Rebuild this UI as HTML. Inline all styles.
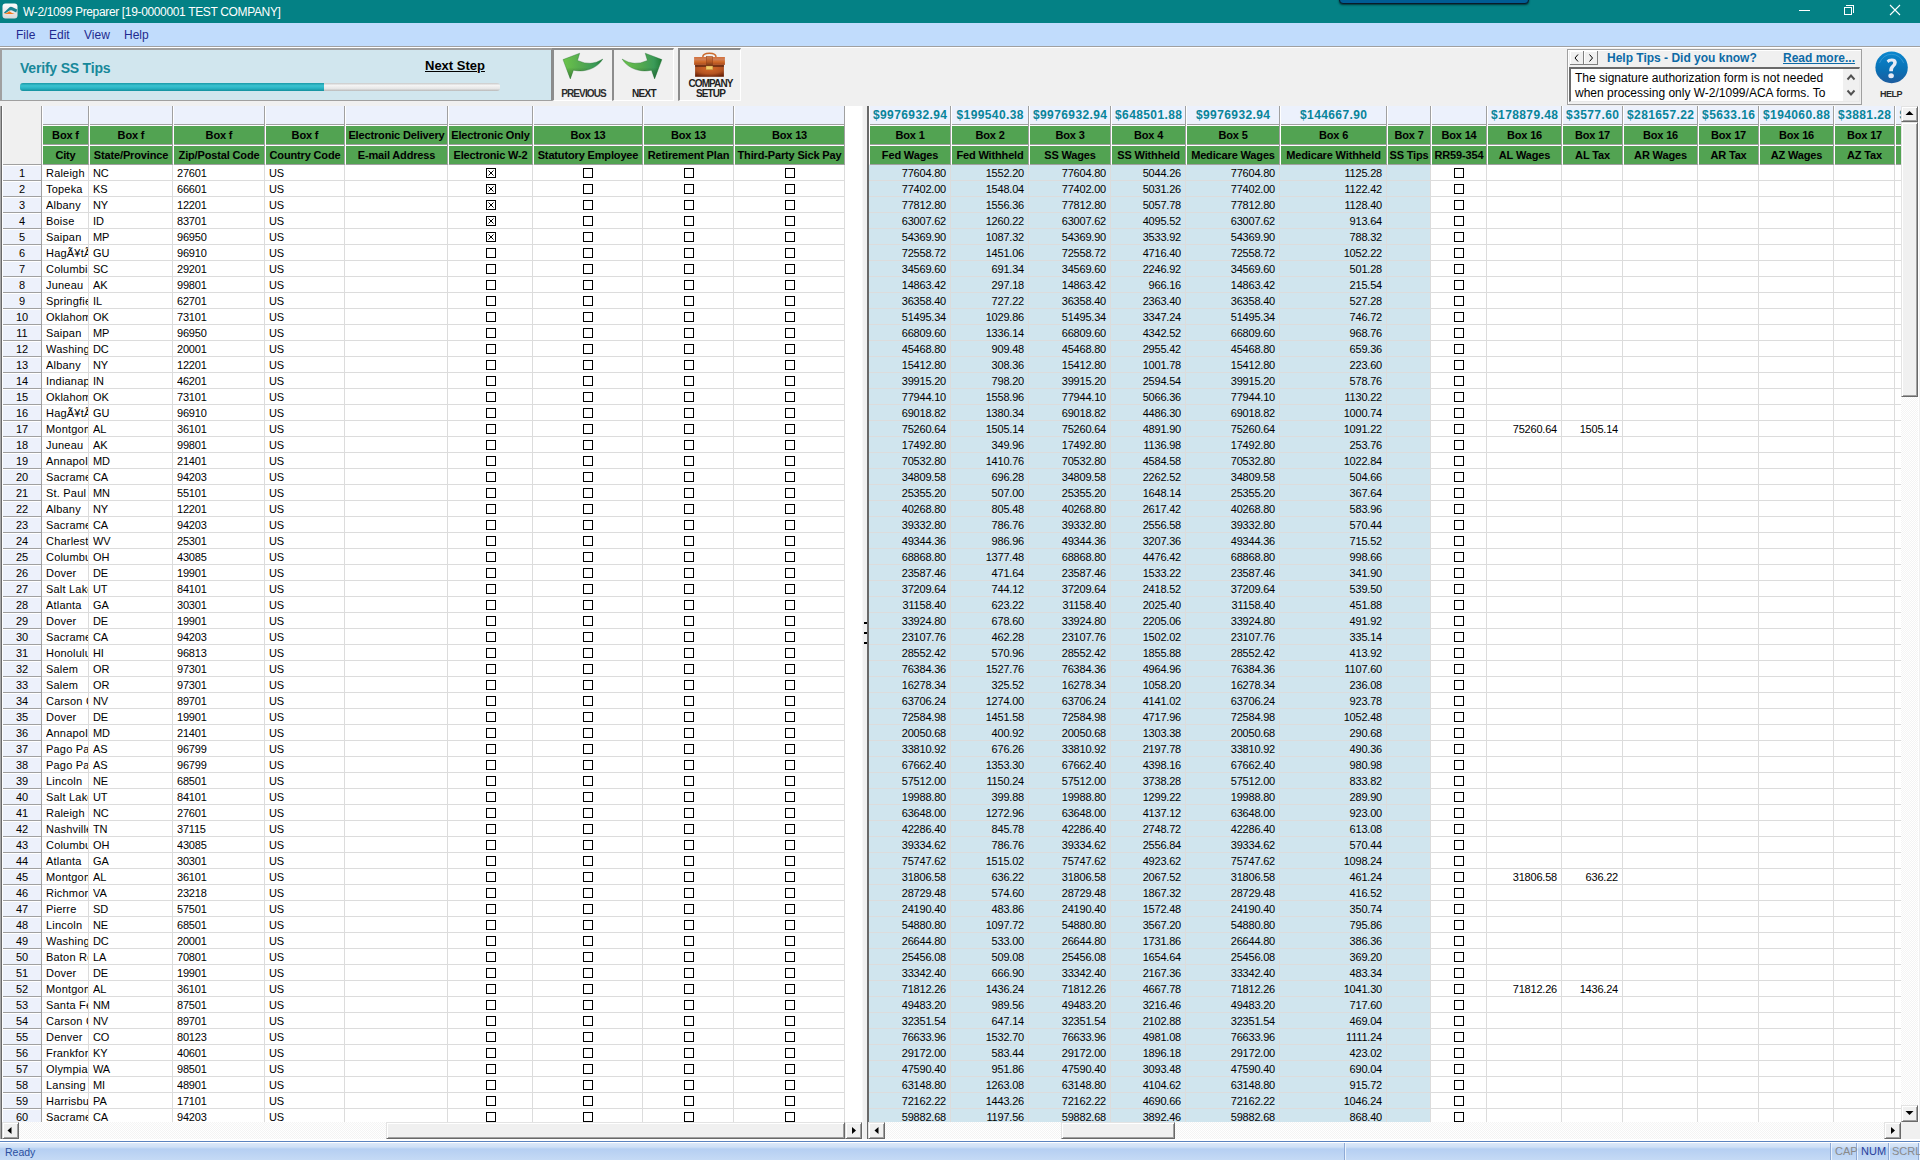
<!DOCTYPE html><html><head><meta charset="utf-8"><title>W-2/1099 Preparer</title><style>

*{box-sizing:border-box}
html,body{margin:0;padding:0}
body{width:1920px;height:1160px;overflow:hidden;position:relative;background:#f0f0f0;font-family:"Liberation Sans", sans-serif;font-size:11px;color:#000}
.ab{position:absolute}
.col{position:absolute;top:165px;height:957px;overflow:hidden}
.wcol{background:repeating-linear-gradient(to bottom,#fff 0,#fff 15px,#dcdcdc 15px,#dcdcdc 16px)}
.bcol{background:repeating-linear-gradient(to bottom,#d0e5ee 0,#d0e5ee 15px,#dcdcdc 15px,#dcdcdc 16px)}
.vl{position:absolute;top:165px;height:957px;width:1px;background:#dcdcdc}
.txt{position:absolute;top:0;left:0;right:0;line-height:16px;white-space:pre;font-size:11px}
.r{text-align:right}
.c{text-align:center}
.tot{position:absolute;top:106px;height:18px;background:#ecf1fc;color:#08849a;font-weight:bold;font-size:12px;letter-spacing:0.4px;text-indent:0.4px;text-align:center;line-height:19px;white-space:nowrap;overflow:hidden}
.hl{position:absolute;width:1px;background:#a0a0a0}
.g1,.g2{position:absolute;height:18px;background:#52a352;font-weight:bold;font-size:11px;letter-spacing:-0.15px;text-align:center;line-height:18px;white-space:nowrap;overflow:hidden}
.g1{top:126px}.g2{top:146px}
.cb{position:absolute;width:10px;height:10px;border:1px solid #000;background:#fff}
.sbtn{position:absolute;width:17px;height:17px;background:#f0f0f0;border-top:1px solid #e3e3e3;border-left:1px solid #e3e3e3;border-right:1px solid #696969;border-bottom:1px solid #696969;box-shadow:inset 1px 1px 0 #fff,inset -1px -1px 0 #a0a0a0}
.hatch{position:absolute;background-color:#f4f4f4;background-image:linear-gradient(45deg,#fff 25%,transparent 25%,transparent 75%,#fff 75%),linear-gradient(45deg,#fff 25%,transparent 25%,transparent 75%,#fff 75%);background-size:2px 2px;background-position:0 0,1px 1px}

</style></head><body>
<div class="ab" style="left:0;top:0;width:1920px;height:23px;background:#048185"></div>
<svg class="ab" style="left:2px;top:3px" width="16" height="16" viewBox="0 0 16 16">
<defs><linearGradient id="ig" x1="0" y1="0" x2="0" y2="1"><stop offset="0" stop-color="#fdfdfd"/><stop offset="1" stop-color="#d8d8d8"/></linearGradient></defs>
<rect x="0.5" y="0.5" width="15" height="15" rx="3" fill="url(#ig)"/>
<path d="M1.8 9.8 L7.5 4.2 Q8.5 3.4 10 4 L15.2 6.6 L14.2 9.6 L10.2 7.4 Q8.8 6.8 7.6 7.6 L3.4 10.2 Z" fill="#1b8592"/>
<path d="M1.6 10.9 Q5 10.4 7.4 8.2 Q10 10.2 12.8 10.9 Z" fill="#f47a1e"/>
</svg>
<div class="ab" style="left:23px;top:4px;height:16px;line-height:16px;color:#fff;font-size:12px;letter-spacing:-0.35px;white-space:nowrap">W-2/1099 Preparer [19-0000001 TEST COMPANY]</div>
<div class="ab" style="left:1339px;top:-6px;width:190px;height:10px;background:#005c94;border:1px solid #0a1a2a;border-radius:0 0 4px 4px;box-shadow:0 1px 2px rgba(0,0,0,.6)"></div>
<div class="ab" style="left:1799px;top:10px;width:11px;height:1px;background:#fff"></div>
<div class="ab" style="left:1846px;top:5px;width:8px;height:8px;border:1px solid #fff;border-left:none;border-bottom:none"></div>
<div class="ab" style="left:1844px;top:7px;width:8px;height:8px;border:1px solid #fff"></div>
<svg class="ab" style="left:1889px;top:4px" width="12" height="12" viewBox="0 0 12 12"><path d="M1 1 L11 11 M11 1 L1 11" stroke="#fff" stroke-width="1.1"/></svg>
<div class="ab" style="left:0;top:23px;width:1920px;height:23px;background:#c1dcfc"></div>
<div class="ab" style="left:16px;top:28px;line-height:14px;font-size:12px;color:#1f2a8f">File</div>
<div class="ab" style="left:49px;top:28px;line-height:14px;font-size:12px;color:#1f2a8f">Edit</div>
<div class="ab" style="left:84px;top:28px;line-height:14px;font-size:12px;color:#1f2a8f">View</div>
<div class="ab" style="left:124px;top:28px;line-height:14px;font-size:12px;color:#1f2a8f">Help</div>
<div class="ab" style="left:0;top:46px;width:1920px;height:1px;background:#a0a0a0"></div>
<div class="ab" style="left:0;top:47px;width:1920px;height:1px;background:#fff"></div>
<div class="ab" style="left:0;top:48px;width:553px;height:53px;background:#d1e6ee;border-top:2px solid #a0a0a0;border-left:2px solid #a0a0a0;border-right:2px solid #8a8a8a;border-bottom:1px solid #a0a0a0"></div>
<div class="ab" style="left:20px;top:59px;line-height:18px;font-size:14px;font-weight:bold;color:#17889a;white-space:nowrap;letter-spacing:-0.2px">Verify SS Tips</div>
<div class="ab" style="left:425px;top:58px;line-height:16px;font-size:13px;font-weight:bold;color:#000;text-decoration:underline;white-space:nowrap">Next Step</div>
<div class="ab" style="left:20px;top:83px;width:480px;height:8px;border-radius:3px;background:linear-gradient(to bottom,#c8c8c8 0,#f4f4f4 30%,#e6e6e6 70%,#b8b8b8 100%)"></div>
<div class="ab" style="left:20px;top:83px;width:304px;height:8px;border-radius:3px 0 0 3px;background:linear-gradient(to bottom,#1a9aa8 0,#3cc2d0 35%,#2ab4c4 65%,#14909e 100%)"></div>
<div class="ab" style="left:552px;top:48px;width:61px;height:53px;background:#f0f0f0;border-top:2px solid #8c8c8c;border-left:2px solid #8c8c8c;border-right:1px solid #fff;border-bottom:1px solid #fff"></div>
<div class="ab" style="left:612px;top:48px;width:62px;height:53px;background:#f0f0f0;border-top:2px solid #8c8c8c;border-left:2px solid #8c8c8c;border-right:1px solid #fff;border-bottom:1px solid #fff"></div>
<div class="ab" style="left:678px;top:48px;width:63px;height:53px;background:#f0f0f0;border-top:2px solid #8c8c8c;border-left:2px solid #8c8c8c;border-right:1px solid #fff;border-bottom:1px solid #fff"></div>
<svg class="ab" style="left:555px;top:48px" width="60" height="36" viewBox="0 0 60 36">
<defs><linearGradient id="ag1" x1="0" y1="0" x2="1" y2="0"><stop offset="0" stop-color="#6cc44a"/><stop offset="0.5" stop-color="#52a850"/><stop offset="0.8" stop-color="#3a9a58"/><stop offset="1" stop-color="#1f7a34"/></linearGradient>
<linearGradient id="ag1b" x1="0" y1="0" x2="0" y2="1"><stop offset="0.55" stop-color="#000" stop-opacity="0"/><stop offset="1" stop-color="#0a4a1a" stop-opacity="0.45"/></linearGradient></defs>
<path d="M8 11.6 L24.7 5.2 L22.5 12.5 Q36 18.8 47.8 11.1 C42 20.5 30 24.8 18.4 22.2 L15.3 30.9 Z" fill="url(#ag1)" stroke="#1d6a2c" stroke-width="0.5" stroke-opacity="0.7"/>
<path d="M8 11.6 L24.7 5.2 L22.5 12.5 Q36 18.8 47.8 11.1 C42 20.5 30 24.8 18.4 22.2 L15.3 30.9 Z" fill="url(#ag1b)"/>
</svg>
<svg class="ab" style="left:615px;top:48px" width="60" height="36" viewBox="0 0 60 36">
<defs><linearGradient id="ag2" x1="1" y1="0" x2="0" y2="0"><stop offset="0" stop-color="#6cc44a"/><stop offset="0.5" stop-color="#52a850"/><stop offset="0.8" stop-color="#3a9a58"/><stop offset="1" stop-color="#1f7a34"/></linearGradient></defs>
<g transform="translate(54.9 0) scale(-1 1)">
<path d="M8 11.6 L24.7 5.2 L22.5 12.5 Q36 18.8 47.8 11.1 C42 20.5 30 24.8 18.4 22.2 L15.3 30.9 Z" fill="url(#ag2)" stroke="#1d6a2c" stroke-width="0.5" stroke-opacity="0.7"/>
<path d="M8 11.6 L24.7 5.2 L22.5 12.5 Q36 18.8 47.8 11.1 C42 20.5 30 24.8 18.4 22.2 L15.3 30.9 Z" fill="url(#ag1b)"/>
</g>
</svg>
<svg class="ab" style="left:685px;top:48px" width="50" height="32" viewBox="0 0 50 32">
<defs>
<linearGradient id="bf1" x1="0" y1="0" x2="0" y2="1"><stop offset="0" stop-color="#d4703a"/><stop offset="0.3" stop-color="#d08058"/><stop offset="0.6" stop-color="#d06a28"/><stop offset="1" stop-color="#a84a1e"/></linearGradient>
<radialGradient id="bf2" cx="0.5" cy="0.3" r="0.75"><stop offset="0" stop-color="#d86a28"/><stop offset="0.6" stop-color="#b45422"/><stop offset="1" stop-color="#6a2208"/></radialGradient>
<linearGradient id="bf3" x1="0" y1="0" x2="0" y2="1"><stop offset="0" stop-color="#d08050"/><stop offset="0.6" stop-color="#b85a24"/><stop offset="1" stop-color="#7a3a18"/></linearGradient>
</defs>
<path d="M17.8 9 Q17.8 5.2 24.4 5.2 Q31 5.2 31 9" fill="none" stroke="#cc6a2c" stroke-width="1.5"/>
<rect x="10.1" y="16.8" width="28.8" height="12" fill="url(#bf2)"/>
<rect x="10.1" y="16.8" width="28.8" height="2.2" fill="#5a2410" opacity="0.7"/>
<rect x="9.1" y="9" width="30.8" height="7.9" fill="url(#bf1)"/>
<rect x="21.2" y="8.3" width="6.5" height="9" fill="url(#bf3)" stroke="#8a3a18" stroke-width="0.4"/>
<rect x="21" y="18" width="6.9" height="3.8" fill="#f2cc68" stroke="#8a5a20" stroke-width="0.3"/>
</svg>
<div class="ab" style="left:554px;top:88px;width:59px;line-height:11px;font-size:10px;font-weight:bold;color:#2c2c2c;text-align:center;letter-spacing:-0.9px">PREVIOUS</div>
<div class="ab" style="left:614px;top:88px;width:60px;line-height:11px;font-size:10px;font-weight:bold;color:#222;text-align:center;letter-spacing:-0.7px">NEXT</div>
<div class="ab" style="left:680px;top:79px;width:61px;line-height:10px;font-size:10px;font-weight:bold;color:#222;text-align:center;letter-spacing:-0.9px">COMPANY<br>SETUP</div>
<div class="ab" style="left:1567px;top:49px;width:295px;height:56px;background:#f0f0f0;border:1px solid #a0a0a0;box-shadow:inset 1px 1px 0 #fff"></div>
<div class="ab" style="left:1570px;top:51px;width:14px;height:14px;background:#f0f0f0;border-right:1px solid #808080;border-bottom:1px solid #808080;box-shadow:inset 1px 1px 0 #fff"></div>
<div class="ab" style="left:1584px;top:51px;width:14px;height:14px;background:#f0f0f0;border-right:1px solid #808080;border-bottom:1px solid #808080;box-shadow:inset 1px 1px 0 #fff"></div>
<svg class="ab" style="left:1572px;top:53px" width="10" height="10" viewBox="0 0 10 10"><path d="M6 1.5 L3 5 L6 8.5" fill="none" stroke="#000" stroke-width="1"/></svg>
<svg class="ab" style="left:1586px;top:53px" width="10" height="10" viewBox="0 0 10 10"><path d="M3.5 1.5 L6.5 5 L3.5 8.5" fill="none" stroke="#000" stroke-width="1"/></svg>
<div class="ab" style="left:1607px;top:51px;line-height:15px;font-size:12px;font-weight:bold;color:#0d6aa6;white-space:nowrap">Help Tips - Did you know?</div>
<div class="ab" style="left:1783px;top:51px;line-height:15px;font-size:12px;font-weight:bold;color:#0d6aa6;white-space:nowrap;text-decoration:underline">Read more...</div>
<div class="ab" style="left:1569px;top:67px;width:291px;height:35px;background:#fff;border-top:2px solid #6a6a6a;border-left:2px solid #6a6a6a;border-right:1px solid #e8e8e8;border-bottom:1px solid #e8e8e8"></div>
<div class="ab" style="left:1843px;top:69px;width:16px;height:32px;background:#f0f0f0"></div>
<svg class="ab" style="left:1846px;top:72px" width="10" height="26" viewBox="0 0 10 26"><path d="M1.5 7.5 L5 3.5 L8.5 7.5 M1.5 18.5 L5 22.5 L8.5 18.5" fill="none" stroke="#505050" stroke-width="1.9"/></svg>
<div class="ab" style="left:1575px;top:71px;line-height:15px;font-size:12px;color:#000;white-space:pre">The signature authorization form is not needed
when processing only W-2/1099/ACA forms. To</div>
<svg class="ab" style="left:1874px;top:50px" width="36" height="36" viewBox="0 0 36 36">
<defs><linearGradient id="hg" x1="0" y1="0" x2="0" y2="1"><stop offset="0" stop-color="#0a86ce"/><stop offset="0.6" stop-color="#0a70b4"/><stop offset="1" stop-color="#1e5c9e"/></linearGradient></defs>
<ellipse cx="17.6" cy="17.4" rx="16.2" ry="15.8" fill="url(#hg)"/>
<path d="M5.5 13 Q9 4.5 17.6 4.3 Q26 4.5 29.7 13" fill="none" stroke="#5aaee0" stroke-width="0.7" opacity="0.7"/>
<path d="M12.6 10.6 Q14 8.5 17.8 8.5 Q22.8 8.7 22.8 12.6 Q22.8 15 20.2 17.2 Q18.9 18.4 18.9 21.2 L15.2 21.2 Q15 17.2 17.6 15.2 Q19.2 14 19.2 12.8 Q19.2 11.6 17.6 11.6 Q15.8 11.6 14.4 13 Z" fill="#e6eaf6"/>
<ellipse cx="17.1" cy="25.7" rx="2.8" ry="2.5" fill="#e6eaf6"/>
</svg>
<div class="ab" style="left:1874px;top:89px;width:34px;line-height:11px;font-size:9px;font-weight:bold;color:#2a2a2a;text-align:center;letter-spacing:-0.5px">HELP</div>
<div class="ab" style="left:0;top:106px;width:1px;height:1034px;background:#a8a8a8"></div>
<div class="ab" style="left:1px;top:106px;width:1px;height:1034px;background:#696969"></div>
<div class="ab" style="left:2px;top:106px;width:1px;height:1016px;background:#fff"></div>
<div class="ab" style="left:3px;top:106px;width:38px;height:58px;background:#f0f0f0"></div>
<div class="ab" style="left:3px;top:164px;width:38px;height:1px;background:#a0a0a0"></div>
<div class="col" style="left:3px;width:38px;background:repeating-linear-gradient(to bottom,#fff 0,#fff 1px,#edf1fb 1px,#edf1fb 15px,#a0a0a0 15px,#a0a0a0 16px)"><div class="txt c">1
2
3
4
5
6
7
8
9
10
11
12
13
14
15
16
17
18
19
20
21
22
23
24
25
26
27
28
29
30
31
32
33
34
35
36
37
38
39
40
41
42
43
44
45
46
47
48
49
50
51
52
53
54
55
56
57
58
59
60
</div></div>
<div class="hl" style="left:41px;top:106px;height:1016px"></div>
<div class="ab" style="left:0;top:0;width:862px;height:1160px;overflow:hidden">
<div class="ab" style="left:42px;top:106px;width:1px;height:58px;background:#fff"></div>
<div class="tot" style="left:43px;width:45px"></div>
<div class="ab" style="left:43px;top:124px;width:46px;height:1px;background:#a0a0a0"></div>
<div class="ab" style="left:43px;top:125px;width:45px;height:1px;background:#fff"></div>
<div class="g1" style="left:43px;width:45px">Box f</div>
<div class="ab" style="left:43px;top:144px;width:46px;height:1px;background:#a0a0a0"></div>
<div class="ab" style="left:43px;top:145px;width:45px;height:1px;background:#fff"></div>
<div class="g2" style="left:43px;width:45px">City</div>
<div class="ab" style="left:43px;top:164px;width:46px;height:1px;background:#a0a0a0"></div>
<div class="hl" style="left:88px;top:106px;height:58px"></div>
<div class="ab" style="left:89px;top:106px;width:1px;height:58px;background:#fff"></div>
<div class="tot" style="left:90px;width:82px"></div>
<div class="ab" style="left:90px;top:124px;width:83px;height:1px;background:#a0a0a0"></div>
<div class="ab" style="left:90px;top:125px;width:82px;height:1px;background:#fff"></div>
<div class="g1" style="left:90px;width:82px">Box f</div>
<div class="ab" style="left:90px;top:144px;width:83px;height:1px;background:#a0a0a0"></div>
<div class="ab" style="left:90px;top:145px;width:82px;height:1px;background:#fff"></div>
<div class="g2" style="left:90px;width:82px">State/Province</div>
<div class="ab" style="left:90px;top:164px;width:83px;height:1px;background:#a0a0a0"></div>
<div class="hl" style="left:172px;top:106px;height:58px"></div>
<div class="ab" style="left:173px;top:106px;width:1px;height:58px;background:#fff"></div>
<div class="tot" style="left:174px;width:90px"></div>
<div class="ab" style="left:174px;top:124px;width:91px;height:1px;background:#a0a0a0"></div>
<div class="ab" style="left:174px;top:125px;width:90px;height:1px;background:#fff"></div>
<div class="g1" style="left:174px;width:90px">Box f</div>
<div class="ab" style="left:174px;top:144px;width:91px;height:1px;background:#a0a0a0"></div>
<div class="ab" style="left:174px;top:145px;width:90px;height:1px;background:#fff"></div>
<div class="g2" style="left:174px;width:90px">Zip/Postal Code</div>
<div class="ab" style="left:174px;top:164px;width:91px;height:1px;background:#a0a0a0"></div>
<div class="hl" style="left:264px;top:106px;height:58px"></div>
<div class="ab" style="left:265px;top:106px;width:1px;height:58px;background:#fff"></div>
<div class="tot" style="left:266px;width:78px"></div>
<div class="ab" style="left:266px;top:124px;width:79px;height:1px;background:#a0a0a0"></div>
<div class="ab" style="left:266px;top:125px;width:78px;height:1px;background:#fff"></div>
<div class="g1" style="left:266px;width:78px">Box f</div>
<div class="ab" style="left:266px;top:144px;width:79px;height:1px;background:#a0a0a0"></div>
<div class="ab" style="left:266px;top:145px;width:78px;height:1px;background:#fff"></div>
<div class="g2" style="left:266px;width:78px">Country Code</div>
<div class="ab" style="left:266px;top:164px;width:79px;height:1px;background:#a0a0a0"></div>
<div class="hl" style="left:344px;top:106px;height:58px"></div>
<div class="ab" style="left:345px;top:106px;width:1px;height:58px;background:#fff"></div>
<div class="tot" style="left:346px;width:101px"></div>
<div class="ab" style="left:346px;top:124px;width:102px;height:1px;background:#a0a0a0"></div>
<div class="ab" style="left:346px;top:125px;width:101px;height:1px;background:#fff"></div>
<div class="g1" style="left:346px;width:101px">Electronic Delivery</div>
<div class="ab" style="left:346px;top:144px;width:102px;height:1px;background:#a0a0a0"></div>
<div class="ab" style="left:346px;top:145px;width:101px;height:1px;background:#fff"></div>
<div class="g2" style="left:346px;width:101px">E-mail Address</div>
<div class="ab" style="left:346px;top:164px;width:102px;height:1px;background:#a0a0a0"></div>
<div class="hl" style="left:447px;top:106px;height:58px"></div>
<div class="ab" style="left:448px;top:106px;width:1px;height:58px;background:#fff"></div>
<div class="tot" style="left:449px;width:83px"></div>
<div class="ab" style="left:449px;top:124px;width:84px;height:1px;background:#a0a0a0"></div>
<div class="ab" style="left:449px;top:125px;width:83px;height:1px;background:#fff"></div>
<div class="g1" style="left:449px;width:83px">Electronic Only</div>
<div class="ab" style="left:449px;top:144px;width:84px;height:1px;background:#a0a0a0"></div>
<div class="ab" style="left:449px;top:145px;width:83px;height:1px;background:#fff"></div>
<div class="g2" style="left:449px;width:83px">Electronic W-2</div>
<div class="ab" style="left:449px;top:164px;width:84px;height:1px;background:#a0a0a0"></div>
<div class="hl" style="left:532px;top:106px;height:58px"></div>
<div class="ab" style="left:533px;top:106px;width:1px;height:58px;background:#fff"></div>
<div class="tot" style="left:534px;width:108px"></div>
<div class="ab" style="left:534px;top:124px;width:109px;height:1px;background:#a0a0a0"></div>
<div class="ab" style="left:534px;top:125px;width:108px;height:1px;background:#fff"></div>
<div class="g1" style="left:534px;width:108px">Box 13</div>
<div class="ab" style="left:534px;top:144px;width:109px;height:1px;background:#a0a0a0"></div>
<div class="ab" style="left:534px;top:145px;width:108px;height:1px;background:#fff"></div>
<div class="g2" style="left:534px;width:108px">Statutory Employee</div>
<div class="ab" style="left:534px;top:164px;width:109px;height:1px;background:#a0a0a0"></div>
<div class="hl" style="left:642px;top:106px;height:58px"></div>
<div class="ab" style="left:643px;top:106px;width:1px;height:58px;background:#fff"></div>
<div class="tot" style="left:644px;width:89px"></div>
<div class="ab" style="left:644px;top:124px;width:90px;height:1px;background:#a0a0a0"></div>
<div class="ab" style="left:644px;top:125px;width:89px;height:1px;background:#fff"></div>
<div class="g1" style="left:644px;width:89px">Box 13</div>
<div class="ab" style="left:644px;top:144px;width:90px;height:1px;background:#a0a0a0"></div>
<div class="ab" style="left:644px;top:145px;width:89px;height:1px;background:#fff"></div>
<div class="g2" style="left:644px;width:89px">Retirement Plan</div>
<div class="ab" style="left:644px;top:164px;width:90px;height:1px;background:#a0a0a0"></div>
<div class="hl" style="left:733px;top:106px;height:58px"></div>
<div class="ab" style="left:734px;top:106px;width:1px;height:58px;background:#fff"></div>
<div class="tot" style="left:735px;width:109px"></div>
<div class="ab" style="left:735px;top:124px;width:110px;height:1px;background:#a0a0a0"></div>
<div class="ab" style="left:735px;top:125px;width:109px;height:1px;background:#fff"></div>
<div class="g1" style="left:735px;width:109px">Box 13</div>
<div class="ab" style="left:735px;top:144px;width:110px;height:1px;background:#a0a0a0"></div>
<div class="ab" style="left:735px;top:145px;width:109px;height:1px;background:#fff"></div>
<div class="g2" style="left:735px;width:109px">Third-Party Sick Pay</div>
<div class="ab" style="left:735px;top:164px;width:110px;height:1px;background:#a0a0a0"></div>
<div class="hl" style="left:844px;top:106px;height:58px"></div>
<div class="col wcol" style="left:42px;width:46px">
<div class="txt" style="left:4px;right:0;overflow:hidden;letter-spacing:0.2px">Raleigh
Topeka
Albany
Boise
Saipan
HagÃ¥tÃ±a
Columbia
Juneau
Springfield
Oklahoma City
Saipan
Washington
Albany
Indianapolis
Oklahoma City
HagÃ¥tÃ±a
Montgomery
Juneau
Annapolis
Sacramento
St. Paul
Albany
Sacramento
Charleston
Columbus
Dover
Salt Lake City
Atlanta
Dover
Sacramento
Honolulu
Salem
Salem
Carson City
Dover
Annapolis
Pago Pago
Pago Pago
Lincoln
Salt Lake City
Raleigh
Nashville
Columbus
Atlanta
Montgomery
Richmond
Pierre
Lincoln
Washington
Baton Rouge
Dover
Montgomery
Santa Fe
Carson City
Denver
Frankfort
Olympia
Lansing
Harrisburg
Sacramento</div>
</div>
<div class="vl" style="left:88px"></div>
<div class="col wcol" style="left:89px;width:83px">
<div class="txt" style="left:4px;right:0;overflow:hidden;letter-spacing:-0.1px">NC
KS
NY
ID
MP
GU
SC
AK
IL
OK
MP
DC
NY
IN
OK
GU
AL
AK
MD
CA
MN
NY
CA
WV
OH
DE
UT
GA
DE
CA
HI
OR
OR
NV
DE
MD
AS
AS
NE
UT
NC
TN
OH
GA
AL
VA
SD
NE
DC
LA
DE
AL
NM
NV
CO
KY
WA
MI
PA
CA</div>
</div>
<div class="vl" style="left:172px"></div>
<div class="col wcol" style="left:173px;width:91px">
<div class="txt" style="left:4px;right:0;overflow:hidden;letter-spacing:-0.2px">27601
66601
12201
83701
96950
96910
29201
99801
62701
73101
96950
20001
12201
46201
73101
96910
36101
99801
21401
94203
55101
12201
94203
25301
43085
19901
84101
30301
19901
94203
96813
97301
97301
89701
19901
21401
96799
96799
68501
84101
27601
37115
43085
30301
36101
23218
57501
68501
20001
70801
19901
36101
87501
89701
80123
40601
98501
48901
17101
94203</div>
</div>
<div class="vl" style="left:264px"></div>
<div class="col wcol" style="left:265px;width:79px">
<div class="txt" style="left:4px;right:0;overflow:hidden;letter-spacing:-0.3px">US
US
US
US
US
US
US
US
US
US
US
US
US
US
US
US
US
US
US
US
US
US
US
US
US
US
US
US
US
US
US
US
US
US
US
US
US
US
US
US
US
US
US
US
US
US
US
US
US
US
US
US
US
US
US
US
US
US
US
US</div>
</div>
<div class="vl" style="left:344px"></div>
<div class="col wcol" style="left:345px;width:102px">
<div class="txt" style="left:4px;right:0;overflow:hidden;letter-spacing:0">


























































</div>
</div>
<div class="vl" style="left:447px"></div>
<div class="col wcol" style="left:448px;width:84px">
<svg class="ab" style="left:38px;top:3px" width="10" height="10" viewBox="0 0 10 10"><rect x="0.5" y="0.5" width="9" height="9" fill="#fff" stroke="#000"/><path d="M2.5 2.5 L7.5 7.5 M7.5 2.5 L2.5 7.5" stroke="#000" stroke-width="1"/></svg>
<svg class="ab" style="left:38px;top:19px" width="10" height="10" viewBox="0 0 10 10"><rect x="0.5" y="0.5" width="9" height="9" fill="#fff" stroke="#000"/><path d="M2.5 2.5 L7.5 7.5 M7.5 2.5 L2.5 7.5" stroke="#000" stroke-width="1"/></svg>
<svg class="ab" style="left:38px;top:35px" width="10" height="10" viewBox="0 0 10 10"><rect x="0.5" y="0.5" width="9" height="9" fill="#fff" stroke="#000"/><path d="M2.5 2.5 L7.5 7.5 M7.5 2.5 L2.5 7.5" stroke="#000" stroke-width="1"/></svg>
<svg class="ab" style="left:38px;top:51px" width="10" height="10" viewBox="0 0 10 10"><rect x="0.5" y="0.5" width="9" height="9" fill="#fff" stroke="#000"/><path d="M2.5 2.5 L7.5 7.5 M7.5 2.5 L2.5 7.5" stroke="#000" stroke-width="1"/></svg>
<svg class="ab" style="left:38px;top:67px" width="10" height="10" viewBox="0 0 10 10"><rect x="0.5" y="0.5" width="9" height="9" fill="#fff" stroke="#000"/><path d="M2.5 2.5 L7.5 7.5 M7.5 2.5 L2.5 7.5" stroke="#000" stroke-width="1"/></svg>
<div class="cb" style="left:38px;top:83px"></div>
<div class="cb" style="left:38px;top:99px"></div>
<div class="cb" style="left:38px;top:115px"></div>
<div class="cb" style="left:38px;top:131px"></div>
<div class="cb" style="left:38px;top:147px"></div>
<div class="cb" style="left:38px;top:163px"></div>
<div class="cb" style="left:38px;top:179px"></div>
<div class="cb" style="left:38px;top:195px"></div>
<div class="cb" style="left:38px;top:211px"></div>
<div class="cb" style="left:38px;top:227px"></div>
<div class="cb" style="left:38px;top:243px"></div>
<div class="cb" style="left:38px;top:259px"></div>
<div class="cb" style="left:38px;top:275px"></div>
<div class="cb" style="left:38px;top:291px"></div>
<div class="cb" style="left:38px;top:307px"></div>
<div class="cb" style="left:38px;top:323px"></div>
<div class="cb" style="left:38px;top:339px"></div>
<div class="cb" style="left:38px;top:355px"></div>
<div class="cb" style="left:38px;top:371px"></div>
<div class="cb" style="left:38px;top:387px"></div>
<div class="cb" style="left:38px;top:403px"></div>
<div class="cb" style="left:38px;top:419px"></div>
<div class="cb" style="left:38px;top:435px"></div>
<div class="cb" style="left:38px;top:451px"></div>
<div class="cb" style="left:38px;top:467px"></div>
<div class="cb" style="left:38px;top:483px"></div>
<div class="cb" style="left:38px;top:499px"></div>
<div class="cb" style="left:38px;top:515px"></div>
<div class="cb" style="left:38px;top:531px"></div>
<div class="cb" style="left:38px;top:547px"></div>
<div class="cb" style="left:38px;top:563px"></div>
<div class="cb" style="left:38px;top:579px"></div>
<div class="cb" style="left:38px;top:595px"></div>
<div class="cb" style="left:38px;top:611px"></div>
<div class="cb" style="left:38px;top:627px"></div>
<div class="cb" style="left:38px;top:643px"></div>
<div class="cb" style="left:38px;top:659px"></div>
<div class="cb" style="left:38px;top:675px"></div>
<div class="cb" style="left:38px;top:691px"></div>
<div class="cb" style="left:38px;top:707px"></div>
<div class="cb" style="left:38px;top:723px"></div>
<div class="cb" style="left:38px;top:739px"></div>
<div class="cb" style="left:38px;top:755px"></div>
<div class="cb" style="left:38px;top:771px"></div>
<div class="cb" style="left:38px;top:787px"></div>
<div class="cb" style="left:38px;top:803px"></div>
<div class="cb" style="left:38px;top:819px"></div>
<div class="cb" style="left:38px;top:835px"></div>
<div class="cb" style="left:38px;top:851px"></div>
<div class="cb" style="left:38px;top:867px"></div>
<div class="cb" style="left:38px;top:883px"></div>
<div class="cb" style="left:38px;top:899px"></div>
<div class="cb" style="left:38px;top:915px"></div>
<div class="cb" style="left:38px;top:931px"></div>
<div class="cb" style="left:38px;top:947px"></div>
</div>
<div class="vl" style="left:532px"></div>
<div class="col wcol" style="left:533px;width:109px">
<div class="cb" style="left:50px;top:3px"></div>
<div class="cb" style="left:50px;top:19px"></div>
<div class="cb" style="left:50px;top:35px"></div>
<div class="cb" style="left:50px;top:51px"></div>
<div class="cb" style="left:50px;top:67px"></div>
<div class="cb" style="left:50px;top:83px"></div>
<div class="cb" style="left:50px;top:99px"></div>
<div class="cb" style="left:50px;top:115px"></div>
<div class="cb" style="left:50px;top:131px"></div>
<div class="cb" style="left:50px;top:147px"></div>
<div class="cb" style="left:50px;top:163px"></div>
<div class="cb" style="left:50px;top:179px"></div>
<div class="cb" style="left:50px;top:195px"></div>
<div class="cb" style="left:50px;top:211px"></div>
<div class="cb" style="left:50px;top:227px"></div>
<div class="cb" style="left:50px;top:243px"></div>
<div class="cb" style="left:50px;top:259px"></div>
<div class="cb" style="left:50px;top:275px"></div>
<div class="cb" style="left:50px;top:291px"></div>
<div class="cb" style="left:50px;top:307px"></div>
<div class="cb" style="left:50px;top:323px"></div>
<div class="cb" style="left:50px;top:339px"></div>
<div class="cb" style="left:50px;top:355px"></div>
<div class="cb" style="left:50px;top:371px"></div>
<div class="cb" style="left:50px;top:387px"></div>
<div class="cb" style="left:50px;top:403px"></div>
<div class="cb" style="left:50px;top:419px"></div>
<div class="cb" style="left:50px;top:435px"></div>
<div class="cb" style="left:50px;top:451px"></div>
<div class="cb" style="left:50px;top:467px"></div>
<div class="cb" style="left:50px;top:483px"></div>
<div class="cb" style="left:50px;top:499px"></div>
<div class="cb" style="left:50px;top:515px"></div>
<div class="cb" style="left:50px;top:531px"></div>
<div class="cb" style="left:50px;top:547px"></div>
<div class="cb" style="left:50px;top:563px"></div>
<div class="cb" style="left:50px;top:579px"></div>
<div class="cb" style="left:50px;top:595px"></div>
<div class="cb" style="left:50px;top:611px"></div>
<div class="cb" style="left:50px;top:627px"></div>
<div class="cb" style="left:50px;top:643px"></div>
<div class="cb" style="left:50px;top:659px"></div>
<div class="cb" style="left:50px;top:675px"></div>
<div class="cb" style="left:50px;top:691px"></div>
<div class="cb" style="left:50px;top:707px"></div>
<div class="cb" style="left:50px;top:723px"></div>
<div class="cb" style="left:50px;top:739px"></div>
<div class="cb" style="left:50px;top:755px"></div>
<div class="cb" style="left:50px;top:771px"></div>
<div class="cb" style="left:50px;top:787px"></div>
<div class="cb" style="left:50px;top:803px"></div>
<div class="cb" style="left:50px;top:819px"></div>
<div class="cb" style="left:50px;top:835px"></div>
<div class="cb" style="left:50px;top:851px"></div>
<div class="cb" style="left:50px;top:867px"></div>
<div class="cb" style="left:50px;top:883px"></div>
<div class="cb" style="left:50px;top:899px"></div>
<div class="cb" style="left:50px;top:915px"></div>
<div class="cb" style="left:50px;top:931px"></div>
<div class="cb" style="left:50px;top:947px"></div>
</div>
<div class="vl" style="left:642px"></div>
<div class="col wcol" style="left:643px;width:90px">
<div class="cb" style="left:41px;top:3px"></div>
<div class="cb" style="left:41px;top:19px"></div>
<div class="cb" style="left:41px;top:35px"></div>
<div class="cb" style="left:41px;top:51px"></div>
<div class="cb" style="left:41px;top:67px"></div>
<div class="cb" style="left:41px;top:83px"></div>
<div class="cb" style="left:41px;top:99px"></div>
<div class="cb" style="left:41px;top:115px"></div>
<div class="cb" style="left:41px;top:131px"></div>
<div class="cb" style="left:41px;top:147px"></div>
<div class="cb" style="left:41px;top:163px"></div>
<div class="cb" style="left:41px;top:179px"></div>
<div class="cb" style="left:41px;top:195px"></div>
<div class="cb" style="left:41px;top:211px"></div>
<div class="cb" style="left:41px;top:227px"></div>
<div class="cb" style="left:41px;top:243px"></div>
<div class="cb" style="left:41px;top:259px"></div>
<div class="cb" style="left:41px;top:275px"></div>
<div class="cb" style="left:41px;top:291px"></div>
<div class="cb" style="left:41px;top:307px"></div>
<div class="cb" style="left:41px;top:323px"></div>
<div class="cb" style="left:41px;top:339px"></div>
<div class="cb" style="left:41px;top:355px"></div>
<div class="cb" style="left:41px;top:371px"></div>
<div class="cb" style="left:41px;top:387px"></div>
<div class="cb" style="left:41px;top:403px"></div>
<div class="cb" style="left:41px;top:419px"></div>
<div class="cb" style="left:41px;top:435px"></div>
<div class="cb" style="left:41px;top:451px"></div>
<div class="cb" style="left:41px;top:467px"></div>
<div class="cb" style="left:41px;top:483px"></div>
<div class="cb" style="left:41px;top:499px"></div>
<div class="cb" style="left:41px;top:515px"></div>
<div class="cb" style="left:41px;top:531px"></div>
<div class="cb" style="left:41px;top:547px"></div>
<div class="cb" style="left:41px;top:563px"></div>
<div class="cb" style="left:41px;top:579px"></div>
<div class="cb" style="left:41px;top:595px"></div>
<div class="cb" style="left:41px;top:611px"></div>
<div class="cb" style="left:41px;top:627px"></div>
<div class="cb" style="left:41px;top:643px"></div>
<div class="cb" style="left:41px;top:659px"></div>
<div class="cb" style="left:41px;top:675px"></div>
<div class="cb" style="left:41px;top:691px"></div>
<div class="cb" style="left:41px;top:707px"></div>
<div class="cb" style="left:41px;top:723px"></div>
<div class="cb" style="left:41px;top:739px"></div>
<div class="cb" style="left:41px;top:755px"></div>
<div class="cb" style="left:41px;top:771px"></div>
<div class="cb" style="left:41px;top:787px"></div>
<div class="cb" style="left:41px;top:803px"></div>
<div class="cb" style="left:41px;top:819px"></div>
<div class="cb" style="left:41px;top:835px"></div>
<div class="cb" style="left:41px;top:851px"></div>
<div class="cb" style="left:41px;top:867px"></div>
<div class="cb" style="left:41px;top:883px"></div>
<div class="cb" style="left:41px;top:899px"></div>
<div class="cb" style="left:41px;top:915px"></div>
<div class="cb" style="left:41px;top:931px"></div>
<div class="cb" style="left:41px;top:947px"></div>
</div>
<div class="vl" style="left:733px"></div>
<div class="col wcol" style="left:734px;width:110px">
<div class="cb" style="left:51px;top:3px"></div>
<div class="cb" style="left:51px;top:19px"></div>
<div class="cb" style="left:51px;top:35px"></div>
<div class="cb" style="left:51px;top:51px"></div>
<div class="cb" style="left:51px;top:67px"></div>
<div class="cb" style="left:51px;top:83px"></div>
<div class="cb" style="left:51px;top:99px"></div>
<div class="cb" style="left:51px;top:115px"></div>
<div class="cb" style="left:51px;top:131px"></div>
<div class="cb" style="left:51px;top:147px"></div>
<div class="cb" style="left:51px;top:163px"></div>
<div class="cb" style="left:51px;top:179px"></div>
<div class="cb" style="left:51px;top:195px"></div>
<div class="cb" style="left:51px;top:211px"></div>
<div class="cb" style="left:51px;top:227px"></div>
<div class="cb" style="left:51px;top:243px"></div>
<div class="cb" style="left:51px;top:259px"></div>
<div class="cb" style="left:51px;top:275px"></div>
<div class="cb" style="left:51px;top:291px"></div>
<div class="cb" style="left:51px;top:307px"></div>
<div class="cb" style="left:51px;top:323px"></div>
<div class="cb" style="left:51px;top:339px"></div>
<div class="cb" style="left:51px;top:355px"></div>
<div class="cb" style="left:51px;top:371px"></div>
<div class="cb" style="left:51px;top:387px"></div>
<div class="cb" style="left:51px;top:403px"></div>
<div class="cb" style="left:51px;top:419px"></div>
<div class="cb" style="left:51px;top:435px"></div>
<div class="cb" style="left:51px;top:451px"></div>
<div class="cb" style="left:51px;top:467px"></div>
<div class="cb" style="left:51px;top:483px"></div>
<div class="cb" style="left:51px;top:499px"></div>
<div class="cb" style="left:51px;top:515px"></div>
<div class="cb" style="left:51px;top:531px"></div>
<div class="cb" style="left:51px;top:547px"></div>
<div class="cb" style="left:51px;top:563px"></div>
<div class="cb" style="left:51px;top:579px"></div>
<div class="cb" style="left:51px;top:595px"></div>
<div class="cb" style="left:51px;top:611px"></div>
<div class="cb" style="left:51px;top:627px"></div>
<div class="cb" style="left:51px;top:643px"></div>
<div class="cb" style="left:51px;top:659px"></div>
<div class="cb" style="left:51px;top:675px"></div>
<div class="cb" style="left:51px;top:691px"></div>
<div class="cb" style="left:51px;top:707px"></div>
<div class="cb" style="left:51px;top:723px"></div>
<div class="cb" style="left:51px;top:739px"></div>
<div class="cb" style="left:51px;top:755px"></div>
<div class="cb" style="left:51px;top:771px"></div>
<div class="cb" style="left:51px;top:787px"></div>
<div class="cb" style="left:51px;top:803px"></div>
<div class="cb" style="left:51px;top:819px"></div>
<div class="cb" style="left:51px;top:835px"></div>
<div class="cb" style="left:51px;top:851px"></div>
<div class="cb" style="left:51px;top:867px"></div>
<div class="cb" style="left:51px;top:883px"></div>
<div class="cb" style="left:51px;top:899px"></div>
<div class="cb" style="left:51px;top:915px"></div>
<div class="cb" style="left:51px;top:931px"></div>
<div class="cb" style="left:51px;top:947px"></div>
</div>
<div class="vl" style="left:844px"></div>
</div>
<div class="ab" style="left:845px;top:106px;width:17px;height:1016px;background:#fff"></div>
<div class="ab" style="left:862px;top:106px;width:5px;height:1034px;background:#f0f0f0"></div>
<div class="ab" style="left:862px;top:106px;width:1px;height:1034px;background:#f8f8f8"></div>
<div class="ab" style="left:864px;top:622px;width:3px;height:2px;background:#000"></div>
<div class="ab" style="left:864px;top:632px;width:3px;height:2px;background:#000"></div>
<div class="ab" style="left:864px;top:642px;width:3px;height:2px;background:#000"></div>
<div class="ab" style="left:867px;top:106px;width:2px;height:1034px;background:#696969"></div>
<div class="ab" style="left:869px;top:0;width:1032px;height:1160px;overflow:hidden">
<div class="ab" style="left:-869px;top:0;width:2000px;height:1160px">
<div class="ab" style="left:869px;top:106px;width:1px;height:58px;background:#fff"></div>
<div class="tot" style="left:870px;width:80px">$9976932.94</div>
<div class="ab" style="left:870px;top:124px;width:81px;height:1px;background:#a0a0a0"></div>
<div class="ab" style="left:870px;top:125px;width:80px;height:1px;background:#fff"></div>
<div class="g1" style="left:870px;width:80px">Box 1</div>
<div class="ab" style="left:870px;top:144px;width:81px;height:1px;background:#a0a0a0"></div>
<div class="ab" style="left:870px;top:145px;width:80px;height:1px;background:#fff"></div>
<div class="g2" style="left:870px;width:80px">Fed Wages</div>
<div class="ab" style="left:870px;top:164px;width:81px;height:1px;background:#a0a0a0"></div>
<div class="hl" style="left:950px;top:106px;height:58px"></div>
<div class="ab" style="left:951px;top:106px;width:1px;height:58px;background:#fff"></div>
<div class="tot" style="left:952px;width:76px">$199540.38</div>
<div class="ab" style="left:952px;top:124px;width:77px;height:1px;background:#a0a0a0"></div>
<div class="ab" style="left:952px;top:125px;width:76px;height:1px;background:#fff"></div>
<div class="g1" style="left:952px;width:76px">Box 2</div>
<div class="ab" style="left:952px;top:144px;width:77px;height:1px;background:#a0a0a0"></div>
<div class="ab" style="left:952px;top:145px;width:76px;height:1px;background:#fff"></div>
<div class="g2" style="left:952px;width:76px">Fed Withheld</div>
<div class="ab" style="left:952px;top:164px;width:77px;height:1px;background:#a0a0a0"></div>
<div class="hl" style="left:1028px;top:106px;height:58px"></div>
<div class="ab" style="left:1029px;top:106px;width:1px;height:58px;background:#fff"></div>
<div class="tot" style="left:1030px;width:80px">$9976932.94</div>
<div class="ab" style="left:1030px;top:124px;width:81px;height:1px;background:#a0a0a0"></div>
<div class="ab" style="left:1030px;top:125px;width:80px;height:1px;background:#fff"></div>
<div class="g1" style="left:1030px;width:80px">Box 3</div>
<div class="ab" style="left:1030px;top:144px;width:81px;height:1px;background:#a0a0a0"></div>
<div class="ab" style="left:1030px;top:145px;width:80px;height:1px;background:#fff"></div>
<div class="g2" style="left:1030px;width:80px">SS Wages</div>
<div class="ab" style="left:1030px;top:164px;width:81px;height:1px;background:#a0a0a0"></div>
<div class="hl" style="left:1110px;top:106px;height:58px"></div>
<div class="ab" style="left:1111px;top:106px;width:1px;height:58px;background:#fff"></div>
<div class="tot" style="left:1112px;width:73px">$648501.88</div>
<div class="ab" style="left:1112px;top:124px;width:74px;height:1px;background:#a0a0a0"></div>
<div class="ab" style="left:1112px;top:125px;width:73px;height:1px;background:#fff"></div>
<div class="g1" style="left:1112px;width:73px">Box 4</div>
<div class="ab" style="left:1112px;top:144px;width:74px;height:1px;background:#a0a0a0"></div>
<div class="ab" style="left:1112px;top:145px;width:73px;height:1px;background:#fff"></div>
<div class="g2" style="left:1112px;width:73px">SS Withheld</div>
<div class="ab" style="left:1112px;top:164px;width:74px;height:1px;background:#a0a0a0"></div>
<div class="hl" style="left:1185px;top:106px;height:58px"></div>
<div class="ab" style="left:1186px;top:106px;width:1px;height:58px;background:#fff"></div>
<div class="tot" style="left:1187px;width:92px">$9976932.94</div>
<div class="ab" style="left:1187px;top:124px;width:93px;height:1px;background:#a0a0a0"></div>
<div class="ab" style="left:1187px;top:125px;width:92px;height:1px;background:#fff"></div>
<div class="g1" style="left:1187px;width:92px">Box 5</div>
<div class="ab" style="left:1187px;top:144px;width:93px;height:1px;background:#a0a0a0"></div>
<div class="ab" style="left:1187px;top:145px;width:92px;height:1px;background:#fff"></div>
<div class="g2" style="left:1187px;width:92px">Medicare Wages</div>
<div class="ab" style="left:1187px;top:164px;width:93px;height:1px;background:#a0a0a0"></div>
<div class="hl" style="left:1279px;top:106px;height:58px"></div>
<div class="ab" style="left:1280px;top:106px;width:1px;height:58px;background:#fff"></div>
<div class="tot" style="left:1281px;width:105px">$144667.90</div>
<div class="ab" style="left:1281px;top:124px;width:106px;height:1px;background:#a0a0a0"></div>
<div class="ab" style="left:1281px;top:125px;width:105px;height:1px;background:#fff"></div>
<div class="g1" style="left:1281px;width:105px">Box 6</div>
<div class="ab" style="left:1281px;top:144px;width:106px;height:1px;background:#a0a0a0"></div>
<div class="ab" style="left:1281px;top:145px;width:105px;height:1px;background:#fff"></div>
<div class="g2" style="left:1281px;width:105px">Medicare Withheld</div>
<div class="ab" style="left:1281px;top:164px;width:106px;height:1px;background:#a0a0a0"></div>
<div class="hl" style="left:1386px;top:106px;height:58px"></div>
<div class="ab" style="left:1387px;top:106px;width:1px;height:58px;background:#fff"></div>
<div class="tot" style="left:1388px;width:42px"></div>
<div class="ab" style="left:1388px;top:124px;width:43px;height:1px;background:#a0a0a0"></div>
<div class="ab" style="left:1388px;top:125px;width:42px;height:1px;background:#fff"></div>
<div class="g1" style="left:1388px;width:42px">Box 7</div>
<div class="ab" style="left:1388px;top:144px;width:43px;height:1px;background:#a0a0a0"></div>
<div class="ab" style="left:1388px;top:145px;width:42px;height:1px;background:#fff"></div>
<div class="g2" style="left:1388px;width:42px">SS Tips</div>
<div class="ab" style="left:1388px;top:164px;width:43px;height:1px;background:#a0a0a0"></div>
<div class="hl" style="left:1430px;top:106px;height:58px"></div>
<div class="ab" style="left:1431px;top:106px;width:1px;height:58px;background:#fff"></div>
<div class="tot" style="left:1432px;width:54px"></div>
<div class="ab" style="left:1432px;top:124px;width:55px;height:1px;background:#a0a0a0"></div>
<div class="ab" style="left:1432px;top:125px;width:54px;height:1px;background:#fff"></div>
<div class="g1" style="left:1432px;width:54px">Box 14</div>
<div class="ab" style="left:1432px;top:144px;width:55px;height:1px;background:#a0a0a0"></div>
<div class="ab" style="left:1432px;top:145px;width:54px;height:1px;background:#fff"></div>
<div class="g2" style="left:1432px;width:54px">RR59-354</div>
<div class="ab" style="left:1432px;top:164px;width:55px;height:1px;background:#a0a0a0"></div>
<div class="hl" style="left:1486px;top:106px;height:58px"></div>
<div class="ab" style="left:1487px;top:106px;width:1px;height:58px;background:#fff"></div>
<div class="tot" style="left:1488px;width:73px">$178879.48</div>
<div class="ab" style="left:1488px;top:124px;width:74px;height:1px;background:#a0a0a0"></div>
<div class="ab" style="left:1488px;top:125px;width:73px;height:1px;background:#fff"></div>
<div class="g1" style="left:1488px;width:73px">Box 16</div>
<div class="ab" style="left:1488px;top:144px;width:74px;height:1px;background:#a0a0a0"></div>
<div class="ab" style="left:1488px;top:145px;width:73px;height:1px;background:#fff"></div>
<div class="g2" style="left:1488px;width:73px">AL Wages</div>
<div class="ab" style="left:1488px;top:164px;width:74px;height:1px;background:#a0a0a0"></div>
<div class="hl" style="left:1561px;top:106px;height:58px"></div>
<div class="ab" style="left:1562px;top:106px;width:1px;height:58px;background:#fff"></div>
<div class="tot" style="left:1563px;width:59px">$3577.60</div>
<div class="ab" style="left:1563px;top:124px;width:60px;height:1px;background:#a0a0a0"></div>
<div class="ab" style="left:1563px;top:125px;width:59px;height:1px;background:#fff"></div>
<div class="g1" style="left:1563px;width:59px">Box 17</div>
<div class="ab" style="left:1563px;top:144px;width:60px;height:1px;background:#a0a0a0"></div>
<div class="ab" style="left:1563px;top:145px;width:59px;height:1px;background:#fff"></div>
<div class="g2" style="left:1563px;width:59px">AL Tax</div>
<div class="ab" style="left:1563px;top:164px;width:60px;height:1px;background:#a0a0a0"></div>
<div class="hl" style="left:1622px;top:106px;height:58px"></div>
<div class="ab" style="left:1623px;top:106px;width:1px;height:58px;background:#fff"></div>
<div class="tot" style="left:1624px;width:73px">$281657.22</div>
<div class="ab" style="left:1624px;top:124px;width:74px;height:1px;background:#a0a0a0"></div>
<div class="ab" style="left:1624px;top:125px;width:73px;height:1px;background:#fff"></div>
<div class="g1" style="left:1624px;width:73px">Box 16</div>
<div class="ab" style="left:1624px;top:144px;width:74px;height:1px;background:#a0a0a0"></div>
<div class="ab" style="left:1624px;top:145px;width:73px;height:1px;background:#fff"></div>
<div class="g2" style="left:1624px;width:73px">AR Wages</div>
<div class="ab" style="left:1624px;top:164px;width:74px;height:1px;background:#a0a0a0"></div>
<div class="hl" style="left:1697px;top:106px;height:58px"></div>
<div class="ab" style="left:1698px;top:106px;width:1px;height:58px;background:#fff"></div>
<div class="tot" style="left:1699px;width:59px">$5633.16</div>
<div class="ab" style="left:1699px;top:124px;width:60px;height:1px;background:#a0a0a0"></div>
<div class="ab" style="left:1699px;top:125px;width:59px;height:1px;background:#fff"></div>
<div class="g1" style="left:1699px;width:59px">Box 17</div>
<div class="ab" style="left:1699px;top:144px;width:60px;height:1px;background:#a0a0a0"></div>
<div class="ab" style="left:1699px;top:145px;width:59px;height:1px;background:#fff"></div>
<div class="g2" style="left:1699px;width:59px">AR Tax</div>
<div class="ab" style="left:1699px;top:164px;width:60px;height:1px;background:#a0a0a0"></div>
<div class="hl" style="left:1758px;top:106px;height:58px"></div>
<div class="ab" style="left:1759px;top:106px;width:1px;height:58px;background:#fff"></div>
<div class="tot" style="left:1760px;width:73px">$194060.88</div>
<div class="ab" style="left:1760px;top:124px;width:74px;height:1px;background:#a0a0a0"></div>
<div class="ab" style="left:1760px;top:125px;width:73px;height:1px;background:#fff"></div>
<div class="g1" style="left:1760px;width:73px">Box 16</div>
<div class="ab" style="left:1760px;top:144px;width:74px;height:1px;background:#a0a0a0"></div>
<div class="ab" style="left:1760px;top:145px;width:73px;height:1px;background:#fff"></div>
<div class="g2" style="left:1760px;width:73px">AZ Wages</div>
<div class="ab" style="left:1760px;top:164px;width:74px;height:1px;background:#a0a0a0"></div>
<div class="hl" style="left:1833px;top:106px;height:58px"></div>
<div class="ab" style="left:1834px;top:106px;width:1px;height:58px;background:#fff"></div>
<div class="tot" style="left:1835px;width:59px">$3881.28</div>
<div class="ab" style="left:1835px;top:124px;width:60px;height:1px;background:#a0a0a0"></div>
<div class="ab" style="left:1835px;top:125px;width:59px;height:1px;background:#fff"></div>
<div class="g1" style="left:1835px;width:59px">Box 17</div>
<div class="ab" style="left:1835px;top:144px;width:60px;height:1px;background:#a0a0a0"></div>
<div class="ab" style="left:1835px;top:145px;width:59px;height:1px;background:#fff"></div>
<div class="g2" style="left:1835px;width:59px">AZ Tax</div>
<div class="ab" style="left:1835px;top:164px;width:60px;height:1px;background:#a0a0a0"></div>
<div class="hl" style="left:1894px;top:106px;height:58px"></div>
<div class="ab" style="left:1895px;top:106px;width:1px;height:58px;background:#fff"></div>
<div class="tot" style="left:1896px;width:74px">$235480.66</div>
<div class="ab" style="left:1896px;top:124px;width:75px;height:1px;background:#a0a0a0"></div>
<div class="ab" style="left:1896px;top:125px;width:74px;height:1px;background:#fff"></div>
<div class="g1" style="left:1896px;width:74px">Box 16</div>
<div class="ab" style="left:1896px;top:144px;width:75px;height:1px;background:#a0a0a0"></div>
<div class="ab" style="left:1896px;top:145px;width:74px;height:1px;background:#fff"></div>
<div class="g2" style="left:1896px;width:74px">CA Wages</div>
<div class="ab" style="left:1896px;top:164px;width:75px;height:1px;background:#a0a0a0"></div>
<div class="hl" style="left:1970px;top:106px;height:58px"></div>
<div class="col bcol" style="left:869px;width:81px">
<div class="txt r" style="left:0;right:4px;letter-spacing:-0.2px">77604.80
77402.00
77812.80
63007.62
54369.90
72558.72
34569.60
14863.42
36358.40
51495.34
66809.60
45468.80
15412.80
39915.20
77944.10
69018.82
75260.64
17492.80
70532.80
34809.58
25355.20
40268.80
39332.80
49344.36
68868.80
23587.46
37209.64
31158.40
33924.80
23107.76
28552.42
76384.36
16278.34
63706.24
72584.98
20050.68
33810.92
67662.40
57512.00
19988.80
63648.00
42286.40
39334.62
75747.62
31806.58
28729.48
24190.40
54880.80
26644.80
25456.08
33342.40
71812.26
49483.20
32351.54
76633.96
29172.00
47590.40
63148.80
72162.22
59882.68</div>
</div>
<div class="vl" style="left:950px"></div>
<div class="col bcol" style="left:951px;width:77px">
<div class="txt r" style="left:0;right:4px;letter-spacing:-0.2px">1552.20
1548.04
1556.36
1260.22
1087.32
1451.06
691.34
297.18
727.22
1029.86
1336.14
909.48
308.36
798.20
1558.96
1380.34
1505.14
349.96
1410.76
696.28
507.00
805.48
786.76
986.96
1377.48
471.64
744.12
623.22
678.60
462.28
570.96
1527.76
325.52
1274.00
1451.58
400.92
676.26
1353.30
1150.24
399.88
1272.96
845.78
786.76
1515.02
636.22
574.60
483.86
1097.72
533.00
509.08
666.90
1436.24
989.56
647.14
1532.70
583.44
951.86
1263.08
1443.26
1197.56</div>
</div>
<div class="vl" style="left:1028px"></div>
<div class="col bcol" style="left:1029px;width:81px">
<div class="txt r" style="left:0;right:4px;letter-spacing:-0.2px">77604.80
77402.00
77812.80
63007.62
54369.90
72558.72
34569.60
14863.42
36358.40
51495.34
66809.60
45468.80
15412.80
39915.20
77944.10
69018.82
75260.64
17492.80
70532.80
34809.58
25355.20
40268.80
39332.80
49344.36
68868.80
23587.46
37209.64
31158.40
33924.80
23107.76
28552.42
76384.36
16278.34
63706.24
72584.98
20050.68
33810.92
67662.40
57512.00
19988.80
63648.00
42286.40
39334.62
75747.62
31806.58
28729.48
24190.40
54880.80
26644.80
25456.08
33342.40
71812.26
49483.20
32351.54
76633.96
29172.00
47590.40
63148.80
72162.22
59882.68</div>
</div>
<div class="vl" style="left:1110px"></div>
<div class="col bcol" style="left:1111px;width:74px">
<div class="txt r" style="left:0;right:4px;letter-spacing:-0.2px">5044.26
5031.26
5057.78
4095.52
3533.92
4716.40
2246.92
966.16
2363.40
3347.24
4342.52
2955.42
1001.78
2594.54
5066.36
4486.30
4891.90
1136.98
4584.58
2262.52
1648.14
2617.42
2556.58
3207.36
4476.42
1533.22
2418.52
2025.40
2205.06
1502.02
1855.88
4964.96
1058.20
4141.02
4717.96
1303.38
2197.78
4398.16
3738.28
1299.22
4137.12
2748.72
2556.84
4923.62
2067.52
1867.32
1572.48
3567.20
1731.86
1654.64
2167.36
4667.78
3216.46
2102.88
4981.08
1896.18
3093.48
4104.62
4690.66
3892.46</div>
</div>
<div class="vl" style="left:1185px"></div>
<div class="col bcol" style="left:1186px;width:93px">
<div class="txt r" style="left:0;right:4px;letter-spacing:-0.2px">77604.80
77402.00
77812.80
63007.62
54369.90
72558.72
34569.60
14863.42
36358.40
51495.34
66809.60
45468.80
15412.80
39915.20
77944.10
69018.82
75260.64
17492.80
70532.80
34809.58
25355.20
40268.80
39332.80
49344.36
68868.80
23587.46
37209.64
31158.40
33924.80
23107.76
28552.42
76384.36
16278.34
63706.24
72584.98
20050.68
33810.92
67662.40
57512.00
19988.80
63648.00
42286.40
39334.62
75747.62
31806.58
28729.48
24190.40
54880.80
26644.80
25456.08
33342.40
71812.26
49483.20
32351.54
76633.96
29172.00
47590.40
63148.80
72162.22
59882.68</div>
</div>
<div class="vl" style="left:1279px"></div>
<div class="col bcol" style="left:1280px;width:106px">
<div class="txt r" style="left:0;right:4px;letter-spacing:-0.2px">1125.28
1122.42
1128.40
913.64
788.32
1052.22
501.28
215.54
527.28
746.72
968.76
659.36
223.60
578.76
1130.22
1000.74
1091.22
253.76
1022.84
504.66
367.64
583.96
570.44
715.52
998.66
341.90
539.50
451.88
491.92
335.14
413.92
1107.60
236.08
923.78
1052.48
290.68
490.36
980.98
833.82
289.90
923.00
613.08
570.44
1098.24
461.24
416.52
350.74
795.86
386.36
369.20
483.34
1041.30
717.60
469.04
1111.24
423.02
690.04
915.72
1046.24
868.40</div>
</div>
<div class="vl" style="left:1386px"></div>
<div class="col bcol" style="left:1387px;width:43px">
</div>
<div class="vl" style="left:1430px"></div>
<div class="col wcol" style="left:1431px;width:55px">
<div class="cb" style="left:23px;top:3px"></div>
<div class="cb" style="left:23px;top:19px"></div>
<div class="cb" style="left:23px;top:35px"></div>
<div class="cb" style="left:23px;top:51px"></div>
<div class="cb" style="left:23px;top:67px"></div>
<div class="cb" style="left:23px;top:83px"></div>
<div class="cb" style="left:23px;top:99px"></div>
<div class="cb" style="left:23px;top:115px"></div>
<div class="cb" style="left:23px;top:131px"></div>
<div class="cb" style="left:23px;top:147px"></div>
<div class="cb" style="left:23px;top:163px"></div>
<div class="cb" style="left:23px;top:179px"></div>
<div class="cb" style="left:23px;top:195px"></div>
<div class="cb" style="left:23px;top:211px"></div>
<div class="cb" style="left:23px;top:227px"></div>
<div class="cb" style="left:23px;top:243px"></div>
<div class="cb" style="left:23px;top:259px"></div>
<div class="cb" style="left:23px;top:275px"></div>
<div class="cb" style="left:23px;top:291px"></div>
<div class="cb" style="left:23px;top:307px"></div>
<div class="cb" style="left:23px;top:323px"></div>
<div class="cb" style="left:23px;top:339px"></div>
<div class="cb" style="left:23px;top:355px"></div>
<div class="cb" style="left:23px;top:371px"></div>
<div class="cb" style="left:23px;top:387px"></div>
<div class="cb" style="left:23px;top:403px"></div>
<div class="cb" style="left:23px;top:419px"></div>
<div class="cb" style="left:23px;top:435px"></div>
<div class="cb" style="left:23px;top:451px"></div>
<div class="cb" style="left:23px;top:467px"></div>
<div class="cb" style="left:23px;top:483px"></div>
<div class="cb" style="left:23px;top:499px"></div>
<div class="cb" style="left:23px;top:515px"></div>
<div class="cb" style="left:23px;top:531px"></div>
<div class="cb" style="left:23px;top:547px"></div>
<div class="cb" style="left:23px;top:563px"></div>
<div class="cb" style="left:23px;top:579px"></div>
<div class="cb" style="left:23px;top:595px"></div>
<div class="cb" style="left:23px;top:611px"></div>
<div class="cb" style="left:23px;top:627px"></div>
<div class="cb" style="left:23px;top:643px"></div>
<div class="cb" style="left:23px;top:659px"></div>
<div class="cb" style="left:23px;top:675px"></div>
<div class="cb" style="left:23px;top:691px"></div>
<div class="cb" style="left:23px;top:707px"></div>
<div class="cb" style="left:23px;top:723px"></div>
<div class="cb" style="left:23px;top:739px"></div>
<div class="cb" style="left:23px;top:755px"></div>
<div class="cb" style="left:23px;top:771px"></div>
<div class="cb" style="left:23px;top:787px"></div>
<div class="cb" style="left:23px;top:803px"></div>
<div class="cb" style="left:23px;top:819px"></div>
<div class="cb" style="left:23px;top:835px"></div>
<div class="cb" style="left:23px;top:851px"></div>
<div class="cb" style="left:23px;top:867px"></div>
<div class="cb" style="left:23px;top:883px"></div>
<div class="cb" style="left:23px;top:899px"></div>
<div class="cb" style="left:23px;top:915px"></div>
<div class="cb" style="left:23px;top:931px"></div>
<div class="cb" style="left:23px;top:947px"></div>
</div>
<div class="vl" style="left:1486px"></div>
<div class="col wcol" style="left:1487px;width:74px">
<div class="txt r" style="left:0;right:4px;letter-spacing:-0.2px">















75260.64



























31806.58






71812.26







</div>
</div>
<div class="vl" style="left:1561px"></div>
<div class="col wcol" style="left:1562px;width:60px">
<div class="txt r" style="left:0;right:4px;letter-spacing:-0.2px">















1505.14



























636.22






1436.24







</div>
</div>
<div class="vl" style="left:1622px"></div>
<div class="col wcol" style="left:1623px;width:74px">
</div>
<div class="vl" style="left:1697px"></div>
<div class="col wcol" style="left:1698px;width:60px">
</div>
<div class="vl" style="left:1758px"></div>
<div class="col wcol" style="left:1759px;width:74px">
</div>
<div class="vl" style="left:1833px"></div>
<div class="col wcol" style="left:1834px;width:60px">
</div>
<div class="vl" style="left:1894px"></div>
<div class="col wcol" style="left:1895px;width:75px">
</div>
<div class="vl" style="left:1970px"></div>
</div></div>
<div class="hatch" style="left:2px;top:1122px;width:860px;height:17px"></div>
<div class="sbtn" style="left:2px;top:1122px"></div>
<svg class="ab" style="left:6px;top:1126px" width="8" height="9" viewBox="0 0 8 9"><path d="M5.5 1 L1.5 4.5 L5.5 8 Z" fill="#000"/></svg>
<div class="sbtn" style="left:386px;top:1122px;width:459px"></div>
<div class="sbtn" style="left:845px;top:1122px"></div>
<svg class="ab" style="left:850px;top:1126px" width="8" height="9" viewBox="0 0 8 9"><path d="M2 1 L6 4.5 L2 8 Z" fill="#000"/></svg>
<div class="hatch" style="left:868px;top:1122px;width:1033px;height:17px"></div>
<div class="sbtn" style="left:868px;top:1122px"></div>
<svg class="ab" style="left:873px;top:1126px" width="8" height="9" viewBox="0 0 8 9"><path d="M5.5 1 L1.5 4.5 L5.5 8 Z" fill="#000"/></svg>
<div class="sbtn" style="left:1061px;top:1122px;width:114px"></div>
<div class="sbtn" style="left:1884px;top:1122px"></div>
<svg class="ab" style="left:1889px;top:1126px" width="8" height="9" viewBox="0 0 8 9"><path d="M2 1 L6 4.5 L2 8 Z" fill="#000"/></svg>
<div class="hatch" style="left:1901px;top:106px;width:17px;height:1016px"></div>
<div class="sbtn" style="left:1901px;top:106px;height:16px"></div>
<svg class="ab" style="left:1905px;top:110px" width="9" height="6" viewBox="0 0 9 6"><path d="M0.5 5 L4.5 1 L8.5 5 Z" fill="#000"/></svg>
<div class="sbtn" style="left:1901px;top:122px;height:275px"></div>
<div class="sbtn" style="left:1901px;top:1105px;height:17px"></div>
<svg class="ab" style="left:1905px;top:1110px" width="9" height="6" viewBox="0 0 9 6"><path d="M0.5 1 L4.5 5 L8.5 1 Z" fill="#000"/></svg>
<div class="ab" style="left:1918px;top:106px;width:1px;height:1016px;background:#fff"></div>
<div class="ab" style="left:0;top:1139px;width:1920px;height:2px;background:#fff"></div>
<div class="ab" style="left:0;top:1141px;width:1920px;height:1px;background:#5b83bf"></div>
<div class="ab" style="left:0;top:1142px;width:1920px;height:18px;background:linear-gradient(to bottom,#fff 0,#fff 1px,#dbe8f9 1px,#cfe0f6 5px,#b5cff2 7px,#c5daf5 18px)"></div>
<div class="ab" style="left:5px;top:1145px;line-height:14px;font-size:10.5px;color:#2a4f9f">Ready</div>
<div class="ab" style="left:1344px;top:1143px;width:1px;height:17px;background:#8eaad6"></div>
<div class="ab" style="left:1345px;top:1143px;width:1px;height:17px;background:#eaf2fc"></div>
<div class="ab" style="left:1830px;top:1143px;width:1px;height:17px;background:#8eaad6"></div>
<div class="ab" style="left:1831px;top:1143px;width:1px;height:17px;background:#eaf2fc"></div>
<div class="ab" style="left:1856px;top:1143px;width:1px;height:17px;background:#8eaad6"></div>
<div class="ab" style="left:1857px;top:1143px;width:1px;height:17px;background:#eaf2fc"></div>
<div class="ab" style="left:1888px;top:1143px;width:1px;height:17px;background:#8eaad6"></div>
<div class="ab" style="left:1889px;top:1143px;width:1px;height:17px;background:#eaf2fc"></div>
<div class="ab" style="left:1918px;top:1143px;width:1px;height:17px;background:#8eaad6"></div>
<div class="ab" style="left:1919px;top:1143px;width:1px;height:17px;background:#eaf2fc"></div>
<div class="ab" style="left:1835px;top:1144px;line-height:14px;font-size:11px;color:#8a8a8a">CAP</div>
<div class="ab" style="left:1861px;top:1144px;line-height:14px;font-size:11px;color:#2a3f9a">NUM</div>
<div class="ab" style="left:1892px;top:1144px;line-height:14px;font-size:11px;color:#8a8a8a">SCRL</div>
</body></html>
